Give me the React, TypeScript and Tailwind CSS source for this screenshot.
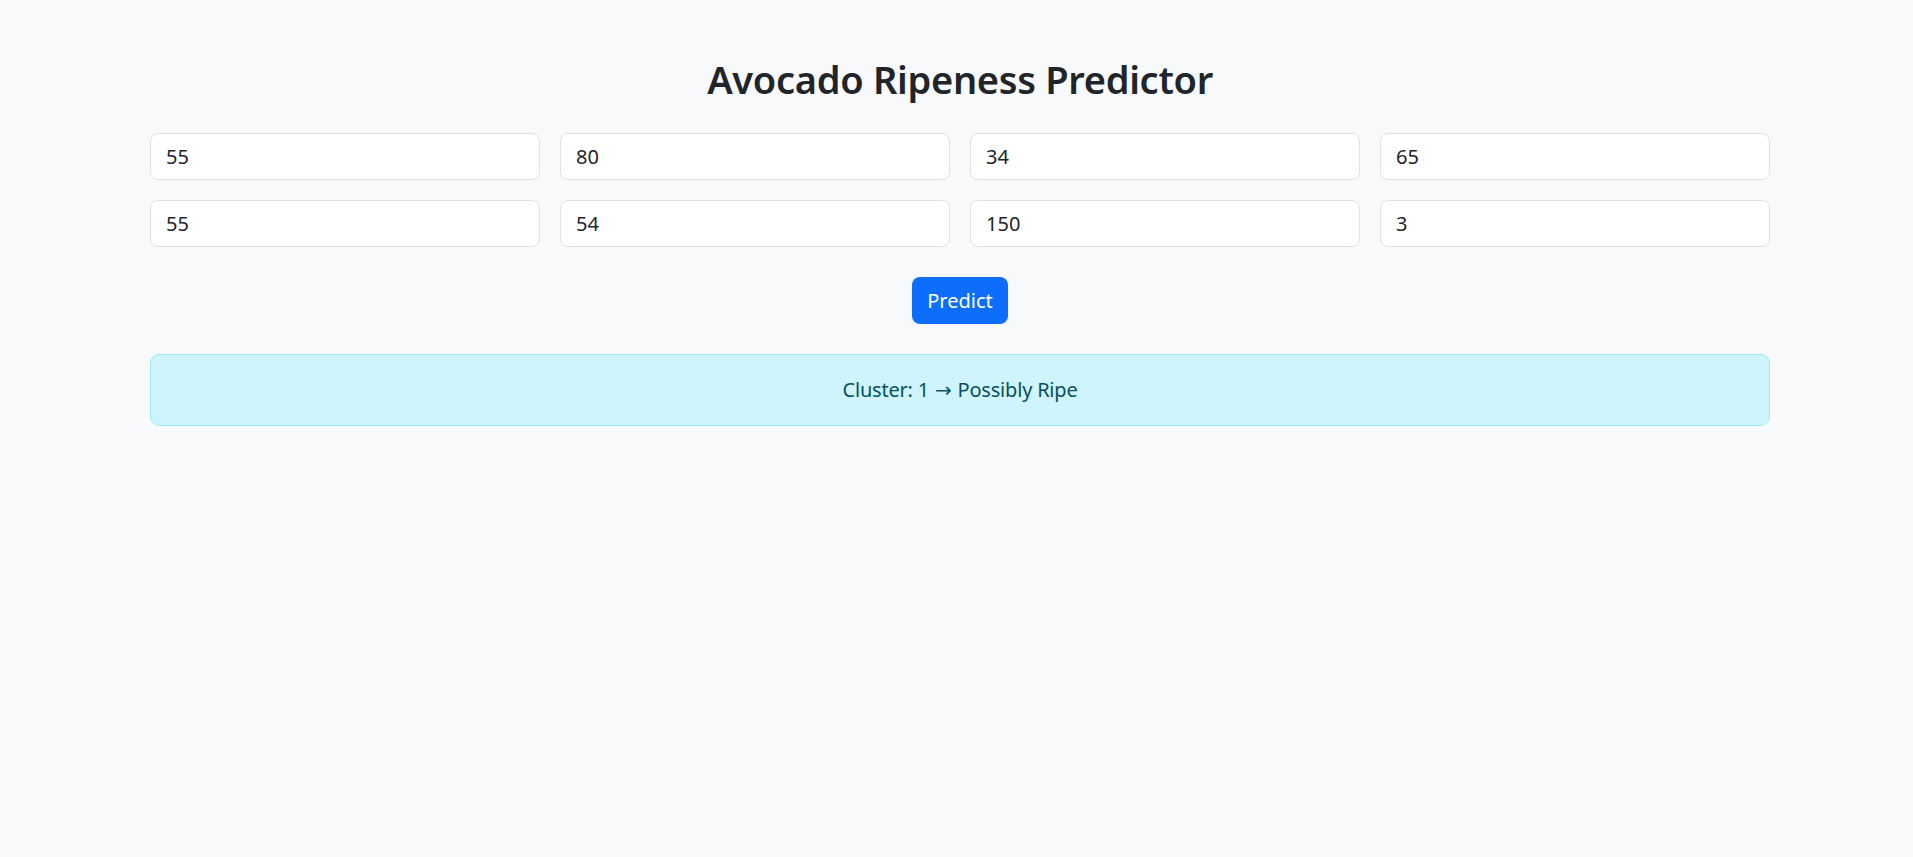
import React from "react";

const values = ["55", "80", "34", "65", "55", "54", "150", "3"];

export default function App() {
  return (
    <div
      className="min-h-screen w-full bg-[#f8f9fa] text-[#212529]"
      style={{ fontFamily: '"Noto Sans", "Open Sans", sans-serif' }}
    >
      <div className="pl-[150px] pt-[55px]">
        <div className="w-[1620px]">
          <h1 className="text-center text-[38px] leading-[48px] font-semibold tracking-[-0.3px] text-[#212529]">
            Avocado Ripeness Predictor
          </h1>
          <div className="mt-[30px] grid grid-cols-4 gap-x-[20px] gap-y-[20px]">
            {values.map((v, i) => (
              <input
                key={i}
                type="text"
                defaultValue={v}
                className="h-[47px] w-full rounded-[8px] border border-[#dee2e6] bg-white px-[15px] text-[20px] text-[#212529] outline-none"
              />
            ))}
          </div>
          <div className="mt-[30px] flex justify-center">
            <button className="h-[47px] rounded-[8px] bg-[#0d6efd] px-[15px] text-[20px] text-white">
              Predict
            </button>
          </div>
          <div className="mt-[30px] flex h-[72px] items-center justify-center rounded-[9px] border border-[#9eeaf9] bg-[#cff4fc] text-[20px] tracking-[-0.2px] text-[#055160]">
            Cluster: 1{" "}
            <span className="mx-[6px]" style={{ fontFamily: '"DejaVu Sans", sans-serif' }}>
              →
            </span>{" "}
            Possibly Ripe
          </div>
        </div>
      </div>
    </div>
  );
}
